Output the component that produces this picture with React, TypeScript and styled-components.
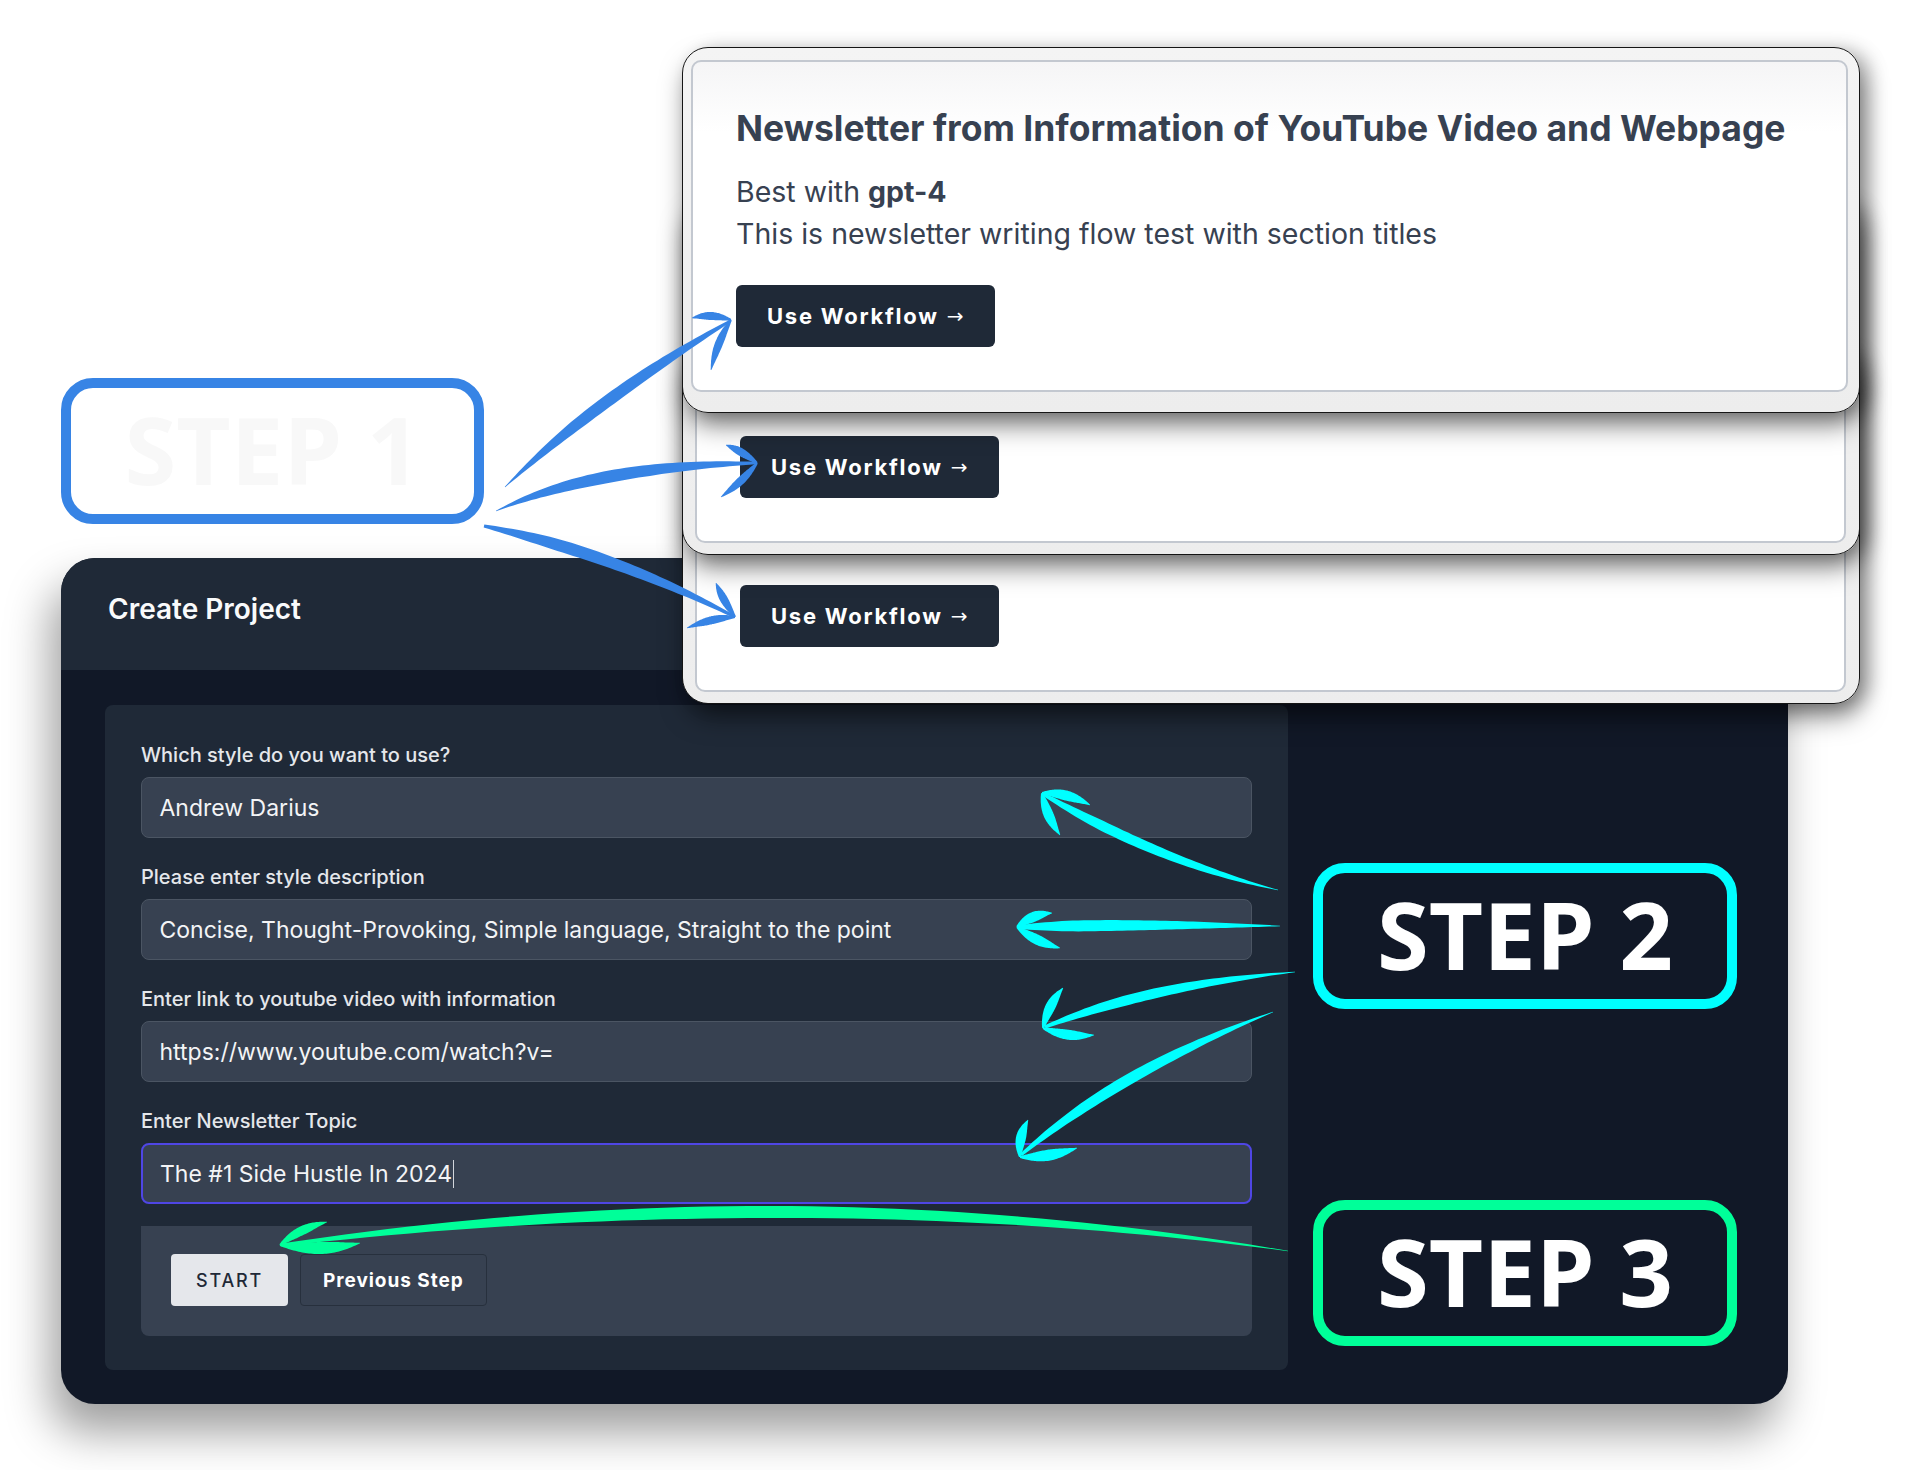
import React from 'react';
import styled, { createGlobalStyle } from 'styled-components';

type Pt = [number, number];

interface Stroke {
  from: Pt;
  ctrl: Pt;
  to: Pt;
  w: [number, number, number];
  peak?: number;
}

interface Arrow {
  color: string;
  shaft: Stroke;
  barbs: Stroke[];
}

// tapered hand-drawn stroke along a quadratic curve
const taper = ({ from, ctrl, to, w, peak = 0.5 }: Stroke) => {
  const n = 48;
  const a: string[] = [];
  const b: string[] = [];
  for (let i = 0; i <= n; i++) {
    const t = i / n;
    const m = 1 - t;
    const x = m * m * from[0] + 2 * m * t * ctrl[0] + t * t * to[0];
    const y = m * m * from[1] + 2 * m * t * ctrl[1] + t * t * to[1];
    const dx = 2 * m * (ctrl[0] - from[0]) + 2 * t * (to[0] - ctrl[0]);
    const dy = 2 * m * (ctrl[1] - from[1]) + 2 * t * (to[1] - ctrl[1]);
    const len = Math.hypot(dx, dy) || 1;
    const nx = -dy / len;
    const ny = dx / len;
    const half =
      (t < peak
        ? w[0] + (w[1] - w[0]) * Math.sin((t / peak) * (Math.PI / 2))
        : w[2] + (w[1] - w[2]) * Math.cos(((t - peak) / (1 - peak)) * (Math.PI / 2))) / 2;
    a.push(`${(x + nx * half).toFixed(1)},${(y + ny * half).toFixed(1)}`);
    b.push(`${(x - nx * half).toFixed(1)},${(y - ny * half).toFixed(1)}`);
  }
  return `M${a.join('L')}L${b.reverse().join('L')}Z`;
};

const leaf = (from: Pt, ctrl: Pt, to: Pt, wide = 9): Stroke => ({ from, ctrl, to, w: [2, wide, 0.6], peak: 0.5 });

const BLUE = '#3784e5';
const CYAN = '#00ffff';
const GREEN = '#00ff99';

const arrows: Arrow[] = [
  {
    color: BLUE,
    shaft: { from: [505, 487], ctrl: [595, 400], to: [730, 321], w: [0.5, 12, 2.5] },
    barbs: [leaf([731, 320], [711, 313], [692, 318], 8), leaf([731, 320], [717, 342], [711, 370], 8)],
  },
  {
    color: BLUE,
    shaft: { from: [496, 511], ctrl: [594, 466], to: [756, 463], w: [0.5, 12, 2.5] },
    barbs: [leaf([757, 463], [740, 450], [726, 445], 8), leaf([757, 463], [742, 482], [721, 497], 8)],
  },
  {
    color: BLUE,
    shaft: { from: [484, 526], ctrl: [614, 554], to: [735, 617], w: [3, 12, 2.5], peak: 0.35 },
    barbs: [leaf([735, 617], [722, 598], [716, 583], 8), leaf([735, 617], [712, 618], [687, 628], 8)],
  },
  {
    color: CYAN,
    shaft: { from: [1278, 890], ctrl: [1160, 862], to: [1043, 794], w: [0.5, 10, 3], peak: 0.7 },
    barbs: [leaf([1042, 793], [1066, 792], [1090, 805], 10), leaf([1042, 793], [1046, 815], [1060, 835], 10)],
  },
  {
    color: CYAN,
    shaft: { from: [1280, 926], ctrl: [1150, 924], to: [1018, 927], w: [0.5, 11, 4], peak: 0.75 },
    barbs: [leaf([1017, 927], [1032, 914], [1052, 913], 10), leaf([1017, 927], [1036, 942], [1060, 948], 10)],
  },
  {
    color: CYAN,
    shaft: { from: [1295, 972], ctrl: [1150, 985], to: [1045, 1027], w: [0.5, 10, 3], peak: 0.6 },
    barbs: [leaf([1043, 1028], [1048, 1005], [1063, 988], 10), leaf([1043, 1028], [1068, 1038], [1094, 1035], 10)],
  },
  {
    color: CYAN,
    shaft: { from: [1273, 1012], ctrl: [1120, 1070], to: [1021, 1155], w: [0.5, 11, 3], peak: 0.55 },
    barbs: [leaf([1020, 1157], [1018, 1137], [1028, 1120], 10), leaf([1020, 1157], [1048, 1158], [1077, 1148], 11)],
  },
  {
    color: GREEN,
    shaft: { from: [1288, 1251], ctrl: [796, 1176], to: [281, 1245], w: [0.5, 12, 3], peak: 0.55 },
    barbs: [leaf([280, 1245], [300, 1228], [327, 1222], 9), leaf([280, 1245], [322, 1252], [360, 1243], 12)],
  },
];

const fields = [
  { label: 'Which style do you want to use?', value: 'Andrew Darius' },
  { label: 'Please enter style description', value: 'Concise, Thought-Provoking, Simple language, Straight to the point' },
  { label: 'Enter link to youtube video with information', value: 'https://www.youtube.com/watch?v=' },
  { label: 'Enter Newsletter Topic', value: 'The #1 Side Hustle In 2024', focused: true },
];

const workflows = [
  { first: true, overlap: 0 },
  { first: false, overlap: 214.5 },
  { first: false, overlap: 207.5 },
];

const App = () => {
  return (
    <Canvas>
      <GlobalStyle />
      <TopRow>
        <StepBadge $color={BLUE} $faded>
          STEP 1
        </StepBadge>
        <CardStack>
          {workflows.map((w, i) => (
            <CardFrame key={i} $first={w.first} $overlap={w.overlap} $z={3 - i}>
              <CardInner $first={w.first}>
                {/* cards lower in the stack keep their text, covered by the card above */}
                <CardText $covered={!w.first} aria-hidden={!w.first}>
                  <CardTitle>Newsletter from Information of YouTube Video and Webpage</CardTitle>
                  <CardMeta>
                    Best with <strong>gpt-4</strong>
                    <br />
                    This is newsletter writing flow test with section titles
                  </CardMeta>
                </CardText>
                <WorkflowButton>
                  Use Workflow <ArrowGlyph>→</ArrowGlyph>
                </WorkflowButton>
              </CardInner>
            </CardFrame>
          ))}
        </CardStack>
      </TopRow>

      <Panel>
        <PanelHeader>Create Project</PanelHeader>
        <PanelBody>
          <FormCard>
            {fields.map((f) => (
              <Field key={f.label}>
                <FieldLabel>{f.label}</FieldLabel>
                <FieldBox $focused={!!f.focused}>
                  {f.value}
                  {f.focused && <Caret />}
                </FieldBox>
              </Field>
            ))}
            <ActionBar>
              <StartButton>Start</StartButton>
              <GhostButton>Previous Step</GhostButton>
            </ActionBar>
          </FormCard>
          <StepColumn>
            <StepBadge $color={CYAN}>STEP 2</StepBadge>
            <StepBadge $color={GREEN}>STEP 3</StepBadge>
          </StepColumn>
        </PanelBody>
      </Panel>

      <Overlay viewBox="0 0 1920 1470">
        {arrows.map((a, i) => (
          <g key={i} fill={a.color}>
            <path d={taper(a.shaft)} />
            {a.barbs.map((b, j) => (
              <path key={j} d={taper(b)} />
            ))}
          </g>
        ))}
      </Overlay>
    </Canvas>
  );
};

export default App;

const GlobalStyle = createGlobalStyle`
  html, body {
    margin: 0;
    padding: 0;
    background: #ffffff;
  }
  body {
    font-family: Inter, "Noto Sans", sans-serif;
  }
  * {
    box-sizing: border-box;
  }
`;

const Canvas = styled.div`
  position: relative;
  width: 1920px;
  height: 1470px;
  overflow: hidden;
  padding: 47px 0 0 61px;
  background: #ffffff;
`;

const TopRow = styled.div`
  display: flex;
  align-items: flex-start;
`;

const StepBadge = styled.div<{ $color: string; $faded?: boolean }>`
  width: ${(p) => (p.$faded ? 423 : 424)}px;
  height: 146px;
  flex-shrink: 0;
  margin-top: ${(p) => (p.$faded ? '331px' : '0')};
  border: 10px solid ${(p) => p.$color};
  border-radius: 32px;
  background: ${(p) => (p.$faded ? 'transparent' : '#111827')};
  color: ${(p) => (p.$faded ? '#f8f8f8' : '#ffffff')};
  font-family: "Open Sans", "Noto Sans", sans-serif;
  font-weight: 700;
  font-size: 94px;
  line-height: 1;
  display: flex;
  align-items: center;
  justify-content: center;
  padding-bottom: 4px;
`;

const CardStack = styled.div`
  position: relative;
  z-index: 2;
  margin-left: 198px;
  width: 1178px;
  display: flex;
  flex-direction: column;
`;

const CardFrame = styled.div<{ $first: boolean; $overlap: number; $z: number }>`
  position: relative;
  z-index: ${(p) => p.$z};
  margin-top: ${(p) => -p.$overlap}px;
  padding: ${(p) => (p.$first ? '12px 11px 20px 8px' : '12px 13px 11px 12px')};
  border: 1px solid #151515;
  border-radius: 26px;
  background: linear-gradient(#f4f4f4, #ededed);
  box-shadow: 3px 14px 26px -2px rgba(0, 0, 0, 0.5), 10px 2px 18px rgba(0, 0, 0, 0.22);
`;

const CardInner = styled.div<{ $first: boolean }>`
  border: 2px solid #c3c8d0;
  border-radius: 10px;
  background: ${(p) => (p.$first ? 'linear-gradient(#f5f5f6, #ffffff 70px)' : '#ffffff')};
  padding: 45px 30px 42.7px 43px;
`;

const CardText = styled.div<{ $covered: boolean }>`
  visibility: ${(p) => (p.$covered ? 'hidden' : 'visible')};
`;

const CardTitle = styled.h2`
  margin: 0;
  font-size: 35.5px;
  line-height: 44px;
  font-weight: 700;
  color: #374151;
  white-space: nowrap;
`;

const CardMeta = styled.p`
  margin: 20px 0 0;
  font-size: 28.5px;
  line-height: 42px;
  font-weight: 400;
  color: #374151;

  strong {
    font-weight: 700;
  }
`;

const WorkflowButton = styled.button`
  margin-top: 30px;
  height: 62px;
  padding: 0 31px;
  border: none;
  border-radius: 6px;
  background: #1f2937;
  color: #ffffff;
  font-family: Inter, "Noto Sans", sans-serif;
  font-size: 22px;
  font-weight: 700;
  letter-spacing: 0.08em;
  display: flex;
  align-items: center;
  gap: 8px;
`;

const ArrowGlyph = styled.span`
  font-family: "DejaVu Sans", sans-serif;
  font-weight: 400;
  font-size: 20px;
  letter-spacing: 0;
`;

const Panel = styled.section`
  position: relative;
  z-index: 1;
  width: 1727px;
  margin-top: -146px;
  border-radius: 34px;
  background: #111827;
  overflow: hidden;
  box-shadow: -10px 28px 45px rgba(0, 0, 0, 0.38);
`;

const PanelHeader = styled.h1`
  margin: 0;
  height: 112px;
  padding: 34px 47px 0;
  background: #1f2937;
  color: #f9fafb;
  font-size: 28px;
  line-height: 34px;
  font-weight: 600;
`;

const PanelBody = styled.div`
  display: flex;
  align-items: flex-start;
  padding: 35px 0 34px 44px;
`;

const FormCard = styled.div`
  width: 1183px;
  flex-shrink: 0;
  padding: 36px 36px 34px;
  border-radius: 8px;
  background: #1f2937;
  display: flex;
  flex-direction: column;
  gap: 25px;
`;

const Field = styled.div`
  display: flex;
  flex-direction: column;
  gap: 8px;
`;

const FieldLabel = styled.label`
  font-size: 20px;
  line-height: 28px;
  font-weight: 500;
  color: #e5e7eb;
`;

const FieldBox = styled.div<{ $focused: boolean }>`
  height: 61px;
  display: flex;
  align-items: center;
  padding: 0 ${(p) => (p.$focused ? '17px' : '17.5px')};
  border: ${(p) => (p.$focused ? '2px solid #4f46e5' : '1.5px solid #4b5563')};
  border-radius: 8px;
  background: #374151;
  color: #f3f4f6;
  font-size: 23px;
  white-space: nowrap;
`;

const Caret = styled.span`
  display: inline-block;
  width: 1px;
  height: 28px;
  margin-left: 1px;
  background: #d1d5db;
`;

const ActionBar = styled.div`
  margin-top: -3px;
  height: 110px;
  padding: 28px 30px;
  display: flex;
  gap: 12px;
  background: #374151;
  border-radius: 0 0 8px 8px;
`;

const StartButton = styled.button`
  height: 52px;
  padding: 0 25px;
  border: none;
  border-radius: 4px;
  background: #e5e7eb;
  color: #1f2937;
  font-family: Inter, "Noto Sans", sans-serif;
  font-size: 18px;
  font-weight: 500;
  letter-spacing: 0.1em;
  text-transform: uppercase;
`;

const GhostButton = styled.button`
  height: 52px;
  padding: 0 22px;
  border: 1.5px solid #27303d;
  border-radius: 4px;
  background: transparent;
  color: #ffffff;
  font-family: Inter, "Noto Sans", sans-serif;
  font-size: 19px;
  font-weight: 700;
  letter-spacing: 0.05em;
`;

const StepColumn = styled.div`
  margin-left: 25px;
  padding-top: 158px;
  display: flex;
  flex-direction: column;
  gap: 191px;
`;

const Overlay = styled.svg`
  position: absolute;
  left: 0;
  top: 0;
  width: 1920px;
  height: 1470px;
  z-index: 5;
  pointer-events: none;
`;
